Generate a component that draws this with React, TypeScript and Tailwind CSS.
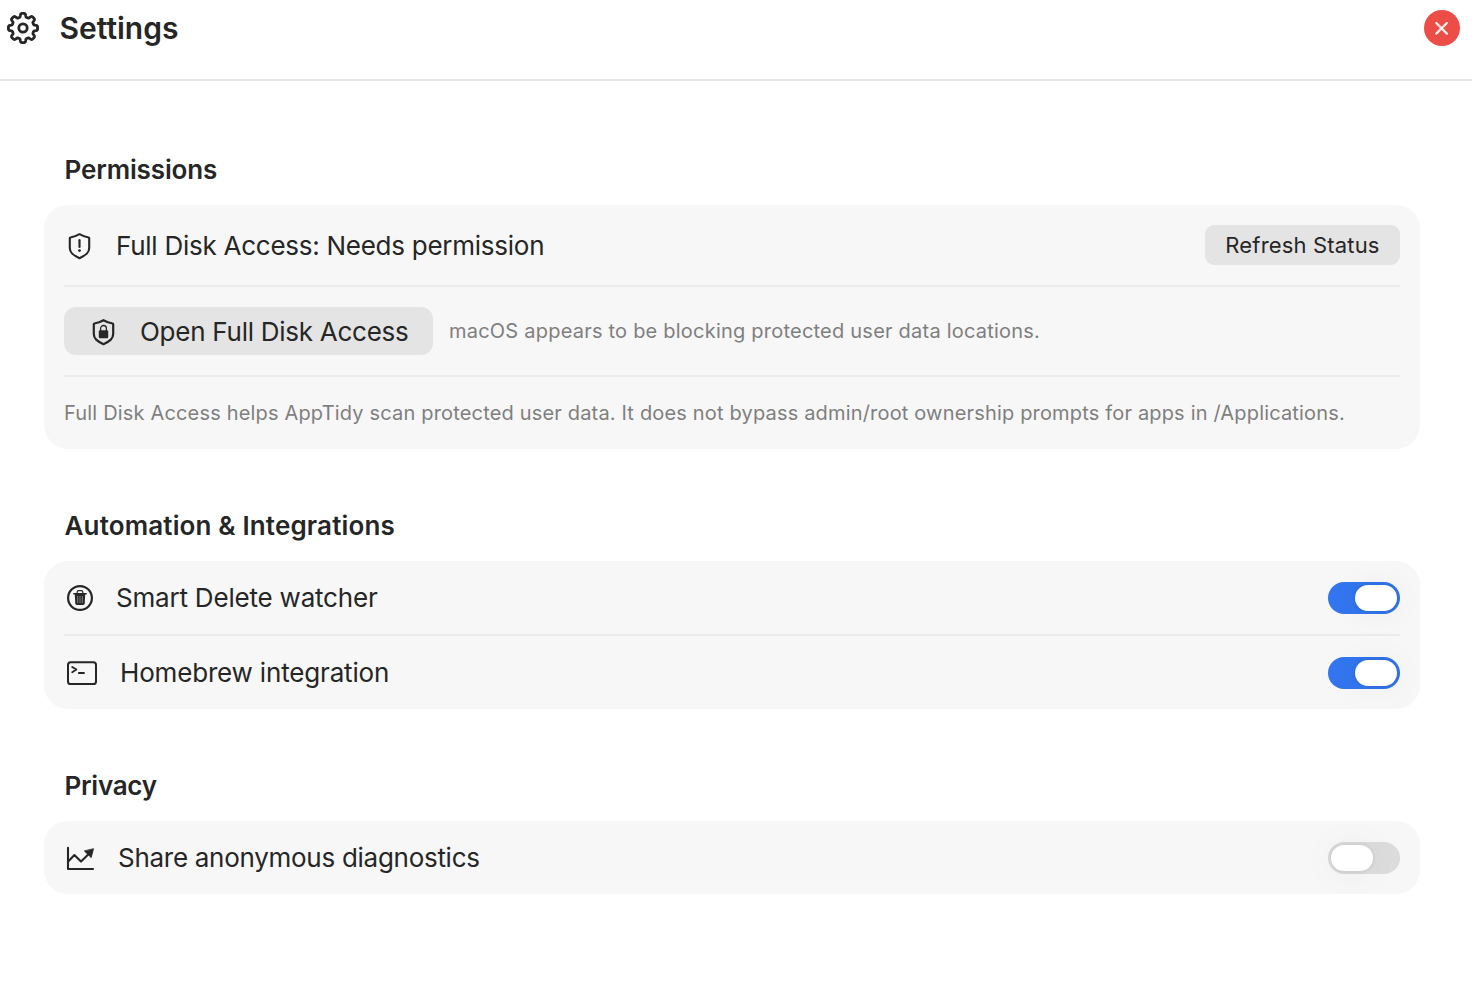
import { useState, type ReactNode } from "react";

// Eight-toothed gear outline around (17, 17)
function gearPath() {
  const points: string[] = [];
  for (let i = 0; i < 360; i++) {
    const a = (i / 360) * Math.PI * 2;
    const wave = Math.tanh(2.4 * (Math.cos(8 * a) + 0.1)) / Math.tanh(2.4);
    const r = 12.85 + 1.75 * wave;
    points.push(`${(17 + r * Math.cos(a)).toFixed(2)} ${(17 + r * Math.sin(a)).toFixed(2)}`);
  }
  return `M${points.join("L")}Z`;
}

function GearIcon() {
  return (
    <svg width="34" height="34" viewBox="0 0 34 34" fill="none" stroke="currentColor" strokeWidth="2.8" strokeLinejoin="round">
      <path d={gearPath()} />
      <circle cx="17" cy="17" r="4.2" />
    </svg>
  );
}

const SHIELD = "M12 2.2 C14.8 3.8 18 4.9 21.1 5.5 Q21.7 5.6 21.7 6.3 V16 C21.7 20.6 18.6 23 12 26.2 C5.4 23 2.3 20.6 2.3 16 V6.3 Q2.3 5.6 2.9 5.5 C6 4.9 9.2 3.8 12 2.2 Z";

function ShieldAlertIcon() {
  return (
    <svg width="24" height="28" viewBox="0.5 0 24 28" fill="none" stroke="currentColor" strokeWidth="2.1" strokeLinejoin="round">
      <path d={SHIELD} />
      <path d="M12 8.2 V15" strokeWidth="2.2" strokeLinecap="round" />
      <circle cx="12" cy="18.6" r="1.4" fill="currentColor" stroke="none" />
    </svg>
  );
}

function ShieldLockIcon() {
  return (
    <svg width="24" height="28" viewBox="0.5 0 24 28" fill="none" stroke="currentColor" strokeWidth="2.2" strokeLinejoin="round">
      <path d={SHIELD} />
      <rect x="7.3" y="12.3" width="9.4" height="7.9" rx="1.2" fill="currentColor" stroke="none" />
      <path d="M9.1 13 V10.4 a2.9 2.9 0 0 1 5.8 0 V13" strokeWidth="1.3" />
    </svg>
  );
}

function TrashIcon() {
  return (
    <svg width="28" height="28" viewBox="0 0 28 28" fill="none" stroke="currentColor">
      <circle cx="14" cy="14" r="11.9" strokeWidth="2.2" />
      <path d="M7.8 9.7 H20.2" strokeWidth="1.5" strokeLinecap="round" />
      <path d="M11.2 9.4 V8 Q11.2 6.7 12.5 6.7 H15.5 Q16.8 6.7 16.8 8 V9.4" strokeWidth="1.2" />
      <path d="M8.8 10 H19.2 L18.7 19.6 Q18.6 21 17.2 21 H10.8 Q9.4 21 9.3 19.6 Z" fill="currentColor" stroke="none" />
      <path d="M11.6 12 L11.8 19.2 M14 12 V19.2 M16.4 12 L16.2 19.2" stroke="#9a9a9a" strokeWidth="0.8" />
    </svg>
  );
}

function TerminalIcon() {
  return (
    <svg width="32" height="26" viewBox="0 0 32 26" fill="none" stroke="currentColor" strokeWidth="2" strokeLinecap="round" strokeLinejoin="round">
      <rect x="2" y="2.3" width="28" height="21.7" rx="2.6" />
      <path d="M6.2 6.9 L10.4 9.6 L6.2 12.3" strokeWidth="1.8" />
      <path d="M12.8 13 H18" strokeWidth="1.8" />
    </svg>
  );
}

function ChartIcon() {
  return (
    <svg width="30" height="26" viewBox="0 0 30 26" fill="none" stroke="currentColor" strokeWidth="2.1" strokeLinecap="round" strokeLinejoin="round">
      <path d="M3 2.8 V24 H28" />
      <path d="M3.2 16.4 L9.4 10.1 L16 16.6 L24 8.8" />
      <path d="M28.4 4.1 L26.2 12.6 L19.6 6.2 Z" fill="currentColor" strokeWidth="0.9" />
    </svg>
  );
}

function Toggle({ label, defaultOn }: { label: string; defaultOn: boolean }) {
  const [on, setOn] = useState(defaultOn);
  return (
    <button
      role="switch"
      aria-checked={on}
      aria-label={label}
      onClick={() => setOn(!on)}
      className={`flex h-8 w-[72px] shrink-0 items-center rounded-full px-[3px] ${
        on ? "justify-end bg-[#3275ee]" : "justify-start bg-[#dcdcdc]"
      }`}
    >
      <span className="h-[26px] w-[42px] rounded-full bg-white shadow-[0_0_4px_rgba(0,0,0,0.1),0_2px_36px_rgba(0,0,0,0.06)]" />
    </button>
  );
}

function Section({ title, titleClass, children }: { title: string; titleClass: string; children: ReactNode }) {
  return (
    <section>
      <h2 className={`ml-[20.5px] h-8 text-[26px] leading-8 font-semibold ${titleClass}`}>{title}</h2>
      <div className="mt-[19px] overflow-hidden rounded-[24px] bg-[#f7f7f7] px-5">{children}</div>
    </section>
  );
}

export default function App() {
  return (
    <div className="h-[1002px] w-full overflow-hidden bg-white font-['Inter',sans-serif] text-[#262626]">
      <header className="flex h-[81px] items-start justify-between border-b-2 border-[#e5e5e5] pt-2.5 pr-3 pl-1.5">
        <div className="flex h-9 items-center">
          <GearIcon />
          <h1 className="ml-[19.5px] text-[30px] leading-9 font-semibold">Settings</h1>
        </div>
        <button aria-label="Close" className="flex size-9 items-center justify-center rounded-full bg-[#ec4d46] text-[#fdeeed]">
          <svg width="16" height="16" viewBox="0 0 16 16" fill="none" stroke="currentColor" strokeWidth="2.3" strokeLinecap="round">
            <path d="M2.3 3 L12.9 13.6 M12.9 3 L2.3 13.6" />
          </svg>
        </button>
      </header>

      <main className="flex flex-col gap-[61px] pt-[73px] pr-[52px] pl-11">
        {/* Permissions */}
        <Section title="Permissions" titleClass="tracking-[-0.13px]">
          <div className="flex h-[82px] items-center border-b-2 border-[#ebebeb]">
            <div className="ml-[3.5px] flex items-center pt-px">
              <ShieldAlertIcon />
            </div>
            <span className="ml-[24.5px] text-[26px] tracking-[-0.26px]">Full Disk Access: Needs permission</span>
            <button className="ml-auto h-10 w-[195px] rounded-[9px] bg-[#e4e4e4] text-[22px] tracking-[0.17px]">
              Refresh Status
            </button>
          </div>
          <div className="flex h-[90px] items-center border-b-2 border-[#ebebeb]">
            <button className="flex h-12 w-[369px] items-center rounded-xl bg-[#e4e4e4] pl-[27.5px]">
              <span className="flex pt-0.5">
                <ShieldLockIcon />
              </span>
              <span className="ml-[24.5px] text-[26px] tracking-[-0.26px] whitespace-nowrap">Open Full Disk Access</span>
            </button>
            <span className="ml-4 text-xl tracking-[0.22px] text-[#7f7f7f]">
              macOS appears to be blocking protected user data locations.
            </span>
          </div>
          <p className="flex h-[72px] items-center text-xl tracking-[0.172px] whitespace-nowrap text-[#7f7f7f]">
            Full Disk Access helps AppTidy scan protected user data. It does not bypass admin/root ownership prompts for
            apps in /Applications.
          </p>
        </Section>

        {/* Automation & Integrations */}
        <Section title="Automation & Integrations" titleClass="tracking-[0.15px]">
          <div className="flex h-[75px] items-center border-b-2 border-[#ebebeb] pt-px">
            <div className="ml-0.5">
              <TrashIcon />
            </div>
            <span className="ml-[22px] pb-0.5 text-[26px] tracking-[-0.2px]">Smart Delete watcher</span>
            <div className="ml-auto">
              <Toggle label="Smart Delete watcher" defaultOn />
            </div>
          </div>
          <div className="flex h-[73px] items-center pt-px">
            <div className="ml-0.5">
              <TerminalIcon />
            </div>
            <span className="ml-[22px] pb-0.5 text-[26px] tracking-[-0.17px]">Homebrew integration</span>
            <div className="ml-auto">
              <Toggle label="Homebrew integration" defaultOn />
            </div>
          </div>
        </Section>

        {/* Privacy */}
        <Section title="Privacy" titleClass="tracking-[-0.25px]">
          <div className="flex h-[73px] items-center pt-px">
            <div className="ml-px">
              <ChartIcon />
            </div>
            <span className="ml-[23px] pb-0.5 text-[26px] tracking-[-0.28px]">Share anonymous diagnostics</span>
            <div className="ml-auto">
              <Toggle label="Share anonymous diagnostics" defaultOn={false} />
            </div>
          </div>
        </Section>
      </main>
    </div>
  );
}
